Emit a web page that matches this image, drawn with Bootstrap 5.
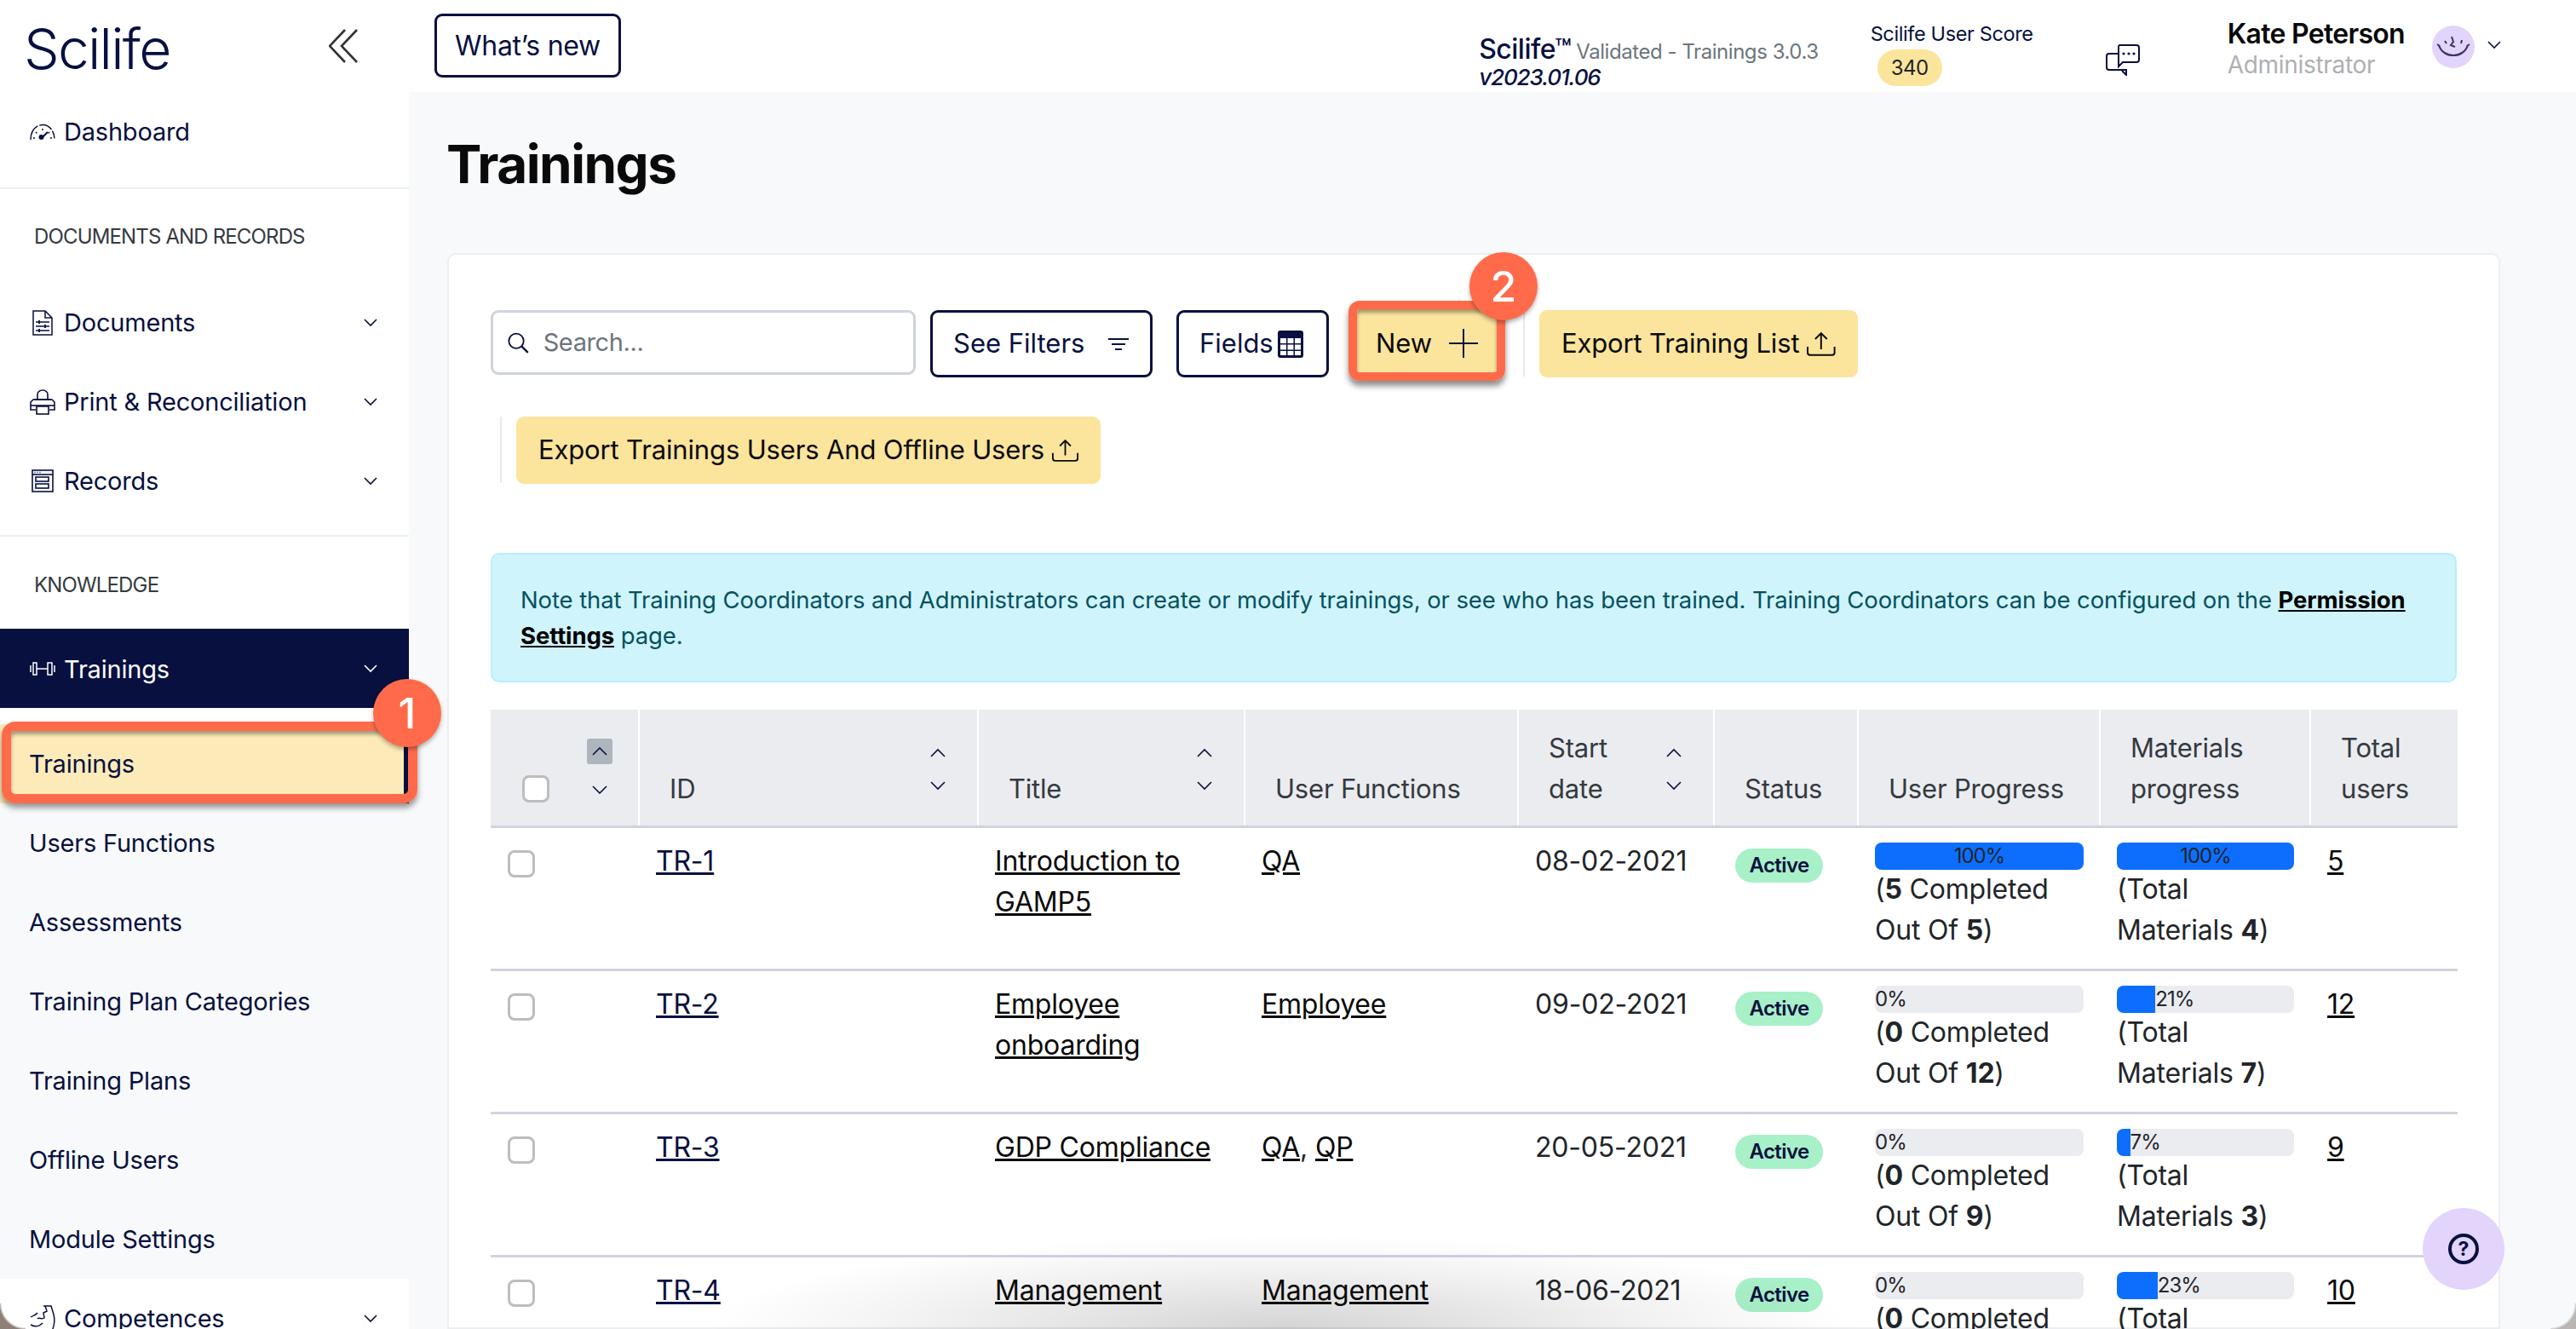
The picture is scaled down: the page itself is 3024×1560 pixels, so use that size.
<!doctype html>
<html lang="en">
<head>
<meta charset="utf-8">
<title>Trainings</title>
<link href="https://cdn.jsdelivr.net/npm/bootstrap@5.3.0/dist/css/bootstrap.min.css" rel="stylesheet">
<style>
:root{--sl-navy:#07103f;--sl-yellow:#fbe49c;--sl-orange:#ff6b4a;--sl-lilac:#e2d4fb;}
html,body{height:100%;}
body{font-family:"Inter","Liberation Sans",sans-serif;font-size:29px;letter-spacing:-.2px;color:#212529;background:#f8f9fa;overflow:hidden;position:relative;}
.sl-page{display:flex;width:3024px;height:1560px;overflow:hidden;}
.sl-side{flex:0 0 480px;background:#fff;position:relative;}
.sl-main{flex:1 1 auto;min-width:0;display:flex;flex-direction:column;}
.sl-brand{height:108px;padding:0 60px 0 28px;display:flex;align-items:center;justify-content:space-between;}
.sl-logo{font-size:66px;font-weight:300;color:var(--sl-navy);letter-spacing:-1.8px;line-height:1;margin-top:5px;}
.sl-item{height:93px;display:flex;align-items:center;padding:0 37px 0 35px;color:var(--sl-navy);text-decoration:none;gap:10px;}
.sl-item .sl-ico{flex:0 0 30px;display:flex;justify-content:center;}
.sl-item .sl-grow{flex:1 1 auto;}
.sl-item.sl-on{background:var(--sl-navy);color:#fff;}
.sl-item.sl-on .sl-grow{padding-top:3px;}
.sl-rule{border-top:2px solid #eceef0;margin:0;opacity:1;}
.sl-label{font-size:24px;line-height:44px;color:#343a40;padding-left:40px;letter-spacing:-.85px;}
.sl-sub{background:#f8f9fa;margin-top:19px;}
.sl-sub a{display:flex;align-items:center;height:93px;padding-left:34px;color:var(--sl-navy);text-decoration:none;}
.sl-sub a.sl-cur{background:#fcebb9;border-right:6px solid var(--sl-navy);position:relative;}
.sl-mark1{position:absolute;left:2px;top:-3px;width:488px;height:96px;border:11px solid var(--sl-orange);border-radius:16px;box-shadow:0 5px 7px rgba(0,0,0,.42),inset 0 4px 4px rgba(0,0,0,.35);pointer-events:none;}
.sl-dot{position:absolute;width:80px;height:80px;border-radius:50%;background:var(--sl-orange);color:#fff;font-size:50px;font-weight:500;display:flex;align-items:center;justify-content:center;box-shadow:0 3px 5px rgba(0,0,0,.3);letter-spacing:0;}
.sl-dot1{left:438px;top:-53px;}
.sl-dot2{left:132px;top:-67px;}
.sl-top{flex:0 0 108px;background:#fff;display:flex;align-items:center;padding-right:88px;}
.btn.sl-new{margin-left:30px;margin-bottom:1px;width:219px;height:75px;border:3px solid var(--sl-navy);border-radius:9px;color:var(--sl-navy);font-size:32px;padding:0;background:#fff;letter-spacing:-.3px;}
.sl-ver{margin-left:auto;margin-top:39px;line-height:33px;color:var(--sl-navy);font-weight:500;font-size:32px;letter-spacing:-.5px;}
.sl-ver small{color:#6c757d;font-size:24px;font-weight:400;margin-left:6px;letter-spacing:-.45px;}
.sl-ver em{display:block;font-size:26px;letter-spacing:-1.1px;margin-top:-3px;}
.sl-score{margin-left:61px;color:var(--sl-navy);font-size:23.5px;line-height:30px;margin-top:18px;letter-spacing:-.37px;}
.sl-score .badge{display:block;width:76px;height:43px;margin:3px 0 0 8px;border-radius:22px;background:var(--sl-yellow);color:#212529;font-size:24px;font-weight:400;line-height:43px;padding:0;letter-spacing:-.6px;}
.sl-chat{margin-left:85px;margin-top:32px;display:flex;}
.sl-who{margin-left:103px;line-height:37px;margin-top:8px;}
.sl-who b{display:block;color:#0a0a0a;font-size:32px;font-weight:600;letter-spacing:-.7px;}
.sl-who span{display:block;color:#adb0b3;font-size:28px;letter-spacing:-.3px;}
.sl-ava{margin-left:32px;width:50px;height:50px;border-radius:50%;background:var(--sl-lilac);display:flex;align-items:center;justify-content:center;margin-top:1px;}
.sl-who-c{margin-left:15px;display:flex;margin-top:-2px;}
.sl-h1{flex:0 0 68px;margin:51px 0 0 44px;font-size:62px;line-height:68px;font-weight:700;color:#0a0a0a;letter-spacing:-1.5px;}
.card.sl-panel{margin:70px 89px 0 45px;flex:1 1 auto;border:2px solid #eceef0;border-radius:10px 10px 0 0;padding:65px 49px 0;background:#fff;min-height:0;}
.sl-tools{display:flex;align-items:flex-start;}
.sl-search{width:499px;height:76px;border:3px solid #ced4da;border-radius:9px;display:flex;align-items:center;padding-left:17px;gap:17px;}
.sl-search .form-control{border:0;padding:0;box-shadow:none;font-size:29px;color:#6c757d;letter-spacing:-.4px;}
.sl-search .form-control::placeholder{color:#6c757d;}
.btn.sl-ghost{height:79px;border:3px solid var(--sl-navy);border-radius:9px;color:var(--sl-navy);font-size:31px;padding:0 24px;display:flex;align-items:center;background:#fff;letter-spacing:0;}
.btn.sl-gold{height:79px;border:0;border-radius:9px;background:var(--sl-yellow);color:#0a0a0a;font-size:31px;padding:0 26px;display:flex;align-items:center;letter-spacing:-.15px;white-space:nowrap;}
.sl-sep{flex:0 0 2px;height:78px;background:#e6e8ea;}
.sl-newwrap{position:relative;margin-left:33px;width:164px;height:75px;margin-top:-1px;}
.sl-newwrap .btn{width:164px;height:75px;justify-content:center;padding:5px 0 0;gap:20px;border-radius:4px;}
.sl-mark2{position:absolute;left:-10px;top:-10px;width:184px;height:94px;border:10px solid var(--sl-orange);border-radius:13px;box-shadow:0 6px 7px rgba(0,0,0,.45),inset 0 4px 4px rgba(0,0,0,.35);pointer-events:none;}
.alert.sl-note{margin:81px 0 32px;padding:32px 33px;border:2px solid #b6effb;border-radius:10px;font-size:27.5px;line-height:42px;color:#055160;background:#cff4fc;letter-spacing:-.11px;}
.alert.sl-note a{color:#000;font-weight:700;}
.table.sl-grid{table-layout:fixed;width:2309px;margin:0;font-size:32px;line-height:48px;letter-spacing:-.2px;}
.sl-grid th{background:#ebecf0;height:137px;padding:0 37px 19px 35px;vertical-align:bottom;font-weight:400;font-size:31px;letter-spacing:-.2px;color:#343a40;border-bottom:3px solid #d0d4dc;border-right:2px solid #fff;}
.sl-grid th:first-child{padding-left:37px;}
.sl-grid th:last-child{border-right:0;}
.sl-grid td{height:168px;padding:15px 19px 0 20px;vertical-align:top;border-bottom:3px solid #d0d4dc;color:#212529;}
.sl-grid td a{color:#0a0a0a;}
.sl-grid td a.sl-id{color:var(--sl-navy);}
.sl-thin{display:flex;justify-content:space-between;align-items:flex-end;}
.sl-sort{display:flex;flex-direction:column;gap:26px;margin-bottom:22px;flex:0 0 18px;}
.sl-sort svg,.sl-sort0 svg{display:block;}
.sl-grid .form-check-input{flex:0 0 32px;width:32px;height:32px;border:3px solid #bdbdbd;border-radius:8px;margin:11px 0 0;float:none;}
.sl-first{display:flex;align-items:flex-end;}
.sl-grid th .sl-first .form-check-input{margin:0 0 8px;}
.sl-sort0{margin-left:44px;width:30px;display:flex;flex-direction:column;align-items:center;gap:25px;margin-bottom:18px;}
.sl-sortbox{width:30px;height:30px;background:#adb5bd;border-radius:3px;display:flex;align-items:center;justify-content:center;}
.badge.sl-active{display:block;width:103px;height:40px;margin:9px 0 0 5px;padding:0;border-radius:20px;background:#a8f0c8;color:var(--sl-navy);font-size:24px;font-weight:600;line-height:40px;letter-spacing:-.6px;}
.progress.sl-bar{height:32px;border-radius:8px;background:#ebecf0;font-size:24px;color:#212529;letter-spacing:-1px;display:flex;align-items:center;line-height:32px;margin-top:2px;margin-bottom:-1px;}
.progress.sl-bar .progress-bar{background:#0d6efd;height:32px;color:#212529;overflow:visible;}
.sl-bar span{white-space:nowrap;}
.sl-grid td p{margin:0;}
.sl-fab{position:absolute;left:2844px;top:1418px;width:96px;height:96px;border-radius:50%;background:var(--sl-lilac);display:flex;align-items:center;justify-content:center;}
.sl-fab span{width:36px;height:36px;border:4px solid var(--sl-navy);border-radius:50%;color:var(--sl-navy);font-size:23px;font-weight:700;display:flex;align-items:center;justify-content:center;letter-spacing:0;}
.sl-drop{position:absolute;left:830px;bottom:0;width:1350px;height:110px;background:radial-gradient(ellipse 50% 100% at 50% 100%,rgba(0,0,0,.17),rgba(0,0,0,.05) 65%,rgba(0,0,0,0) 100%);pointer-events:none;}
.sl-cnr{position:absolute;bottom:0;width:30px;height:30px;pointer-events:none;}
.sl-cnr-l{left:0;background:radial-gradient(circle at 100% 0,rgba(0,0,0,0) 28px,#8d8078 31px);}
.sl-cnr-r{right:0;background:radial-gradient(circle at 0 0,rgba(0,0,0,0) 28px,#b9b6b3 31px);}
</style>
</head>
<body>
<div class="sl-page">
  <aside class="sl-side">
    <div class="sl-brand">
      <span class="sl-logo">Scilife</span>
      <svg width="34" height="40" viewBox="0 0 34 40" fill="none" stroke="#333" stroke-width="2.6"><path d="M19 1 1 20l18 19M33 1 15 20l18 19"/></svg>
    </div>
    <a class="sl-item" href="#" style="margin-bottom:19px">
      <span class="sl-ico"><svg width="30" height="20" viewBox="0 0 30 20" fill="none" stroke="#07103f" stroke-width="1.5"><path d="M1 19C1 9 7 1.5 15 1.5S29 9 29 19" stroke-dasharray="19 2 16 2 9 2"/><path d="M15 6v2M7 10l1.4 1.4M23 10l-1.4 1.4M4 17h2M24 17h2"/><path d="m14 17 7-7" stroke-width="2"/><circle cx="13.500" cy="16" r="3" fill="#07103f" stroke="none"/></svg></span>
      <span>Dashboard</span>
    </a>
    <hr class="sl-rule">
    <div class="sl-label" style="padding-top:34px;padding-bottom:32px">DOCUMENTS AND RECORDS</div>
    <a class="sl-item" href="#">
      <span class="sl-ico"><svg width="24" height="30" viewBox="0 0 24 30" fill="none" stroke="#07103f" stroke-width="1.5"><path d="M1 1h14l8 8v20H1zM15 1v8h8"/><path d="M4 14h16M4 19h16M4 24h16" stroke-width="1.3"/><path d="M8 12v4M15 17v4M8 22v4" stroke-width="1.8"/></svg></span>
      <span class="sl-grow">Documents</span>
      <svg width="16" height="10" viewBox="0 0 16 10" fill="none" stroke="#07103f" stroke-width="1.6"><path d="m1 1 7 7 7-7"/></svg>
    </a>
    <a class="sl-item" href="#">
      <span class="sl-ico"><svg width="30" height="30" viewBox="0 0 30 30" fill="none" stroke="#07103f" stroke-width="1.6"><path d="M9 12V6a6 5 0 0 1 12 0v6M5 12h20"/><path d="M7 24H1v-9l3-3h22l3 3v9h-6"/><rect x="8" y="20" width="14" height="9"/><path d="M1 19h28"/></svg></span>
      <span class="sl-grow">Print &amp; Reconciliation</span>
      <svg width="16" height="10" viewBox="0 0 16 10" fill="none" stroke="#07103f" stroke-width="1.6"><path d="m1 1 7 7 7-7"/></svg>
    </a>
    <a class="sl-item" href="#" style="margin-bottom:17px">
      <span class="sl-ico"><svg width="26" height="27" viewBox="0 0 26 27" fill="none" stroke="#07103f" stroke-width="1.6"><rect x="1" y="1" width="24" height="25"/><path d="M1 6h24"/><path d="M3.500 3.500h1M6.500 3.500h1M9.500 3.500h1" stroke-width="1.400"/><rect x="5" y="9" width="15" height="5"/><rect x="5" y="17" width="15" height="5"/></svg></span>
      <span class="sl-grow">Records</span>
      <svg width="16" height="10" viewBox="0 0 16 10" fill="none" stroke="#07103f" stroke-width="1.6"><path d="m1 1 7 7 7-7"/></svg>
    </a>
    <hr class="sl-rule">
    <div class="sl-label" style="padding-top:35px;padding-bottom:29px">KNOWLEDGE</div>
    <a class="sl-item sl-on" href="#">
      <span class="sl-ico"><svg width="30" height="16" viewBox="0 0 30 16" fill="none" stroke="#fff" stroke-width="1.5"><rect x="4" y="1" width="4" height="14"/><rect x="21" y="1" width="5" height="14"/><path d="M1 4v8M29 4v8M8 8h13"/></svg></span>
      <span class="sl-grow">Trainings</span>
      <svg width="16" height="10" viewBox="0 0 16 10" fill="none" stroke="#fff" stroke-width="1.6"><path d="m1 1 7 7 7-7"/></svg>
    </a>
    <nav class="sl-sub">
      <a class="sl-cur" href="#">Trainings<span class="sl-mark1"></span><span class="sl-dot sl-dot1">1</span></a>
      <a href="#">Users Functions</a>
      <a href="#">Assessments</a>
      <a href="#">Training Plan Categories</a>
      <a href="#">Training Plans</a>
      <a href="#">Offline Users</a>
      <a href="#">Module Settings</a>
    </nav>
    <a class="sl-item" href="#">
      <span class="sl-ico"><svg width="30" height="34" viewBox="0 0 30 34" fill="none" stroke="#07103f" stroke-width="1.5"><path d="M1 15c3-2 6-2 8-5M16 2h9l3 10c2 8 0 14-2 20H8M18 2l2 6-4 2 1 6c-3 2-6-1-8 1M1 24c5 3 10 2 14-2"/></svg></span>
      <span class="sl-grow">Competences</span>
      <svg width="16" height="10" viewBox="0 0 16 10" fill="none" stroke="#07103f" stroke-width="1.6"><path d="m1 1 7 7 7-7"/></svg>
    </a>
  </aside>

  <main class="sl-main">
    <header class="sl-top">
      <button class="btn sl-new" type="button">What’s new</button>
      <div class="sl-ver">Scilife™<small>Validated - Trainings 3.0.3</small><em>v2023.01.06</em></div>
      <div class="sl-score">Scilife User Score<span class="badge">340</span></div>
      <div class="sl-chat"><svg width="40" height="37" viewBox="0 0 40 37" fill="none" stroke="#07103f" stroke-width="2"><path d="M16 1h20a3 3 0 0 1 3 3v14a3 3 0 0 1-3 3H20l-5 5V4a3 3 0 0 1 1-3z"/><path d="M15 11H4a3 3 0 0 0-3 3v13a3 3 0 0 0 3 3h20v6l-5-5"/><path d="M24 36v-7"/><circle cx="21" cy="11" r="1.600" fill="#07103f" stroke="none"/><circle cx="27" cy="11" r="1.600" fill="#07103f" stroke="none"/><circle cx="33" cy="11" r="1.600" fill="#07103f" stroke="none"/></svg></div>
      <div class="sl-who"><b>Kate Peterson</b><span>Administrator</span></div>
      <div class="sl-ava"><svg width="40" height="26" viewBox="0 0 40 26" fill="none" stroke="#3a3560" stroke-width="2"><path d="M3 11c5 16 29 16 34 0" stroke-width="2.200"/><path d="M1 10l3 2M39 10l-3 2M10 6l2 3M30 5l-1 4M18 1l2 6-3 4 5 2"/></svg></div>
      <div class="sl-who-c"><svg width="16" height="10" viewBox="0 0 16 10" fill="none" stroke="#07103f" stroke-width="1.6"><path d="m1 1 7 7 7-7"/></svg></div>
    </header>
    <h1 class="sl-h1">Trainings</h1>
    <section class="card sl-panel">
      <div class="sl-tools">
        <div class="sl-search">
          <svg width="27" height="27" viewBox="0 0 27 27" fill="none" stroke="#07103f" stroke-width="2"><circle cx="11" cy="11" r="9.500"/><path d="m18 18 8 8" stroke-width="2.600"/></svg>
          <input class="form-control" type="text" placeholder="Search...">
        </div>
        <button class="btn sl-ghost" type="button" style="margin-left:17px;width:261px;gap:28px">See Filters
          <svg width="24" height="14" viewBox="0 0 24 14" fill="none" stroke="#07103f" stroke-width="2"><path d="M0 1h24M4 7h16M8 13h8"/></svg>
        </button>
        <button class="btn sl-ghost" type="button" style="margin-left:28px;width:179px;gap:5px;padding:0 0 0 24px">Fields
          <svg width="30" height="32" viewBox="0 0 30 32"><rect width="30" height="32" rx="3" fill="#07103f"/><path fill="#fff" d="M3 9h7v6H3zM11.500 9h7v6h-7zM20 9h7v6h-7zM3 16.500h7v6H3zM11.500 16.500h7v6h-7zM20 16.500h7v6h-7zM3 24h7v5H3zM11.500 24h7v5h-7zM20 24h7v5h-7z"/></svg>
        </button>
        <div class="sl-newwrap">
          <button class="btn sl-gold" type="button">New
            <svg width="34" height="34" viewBox="0 0 34 34" fill="none" stroke="#07103f" stroke-width="2"><path d="M17 0v34M0 17h34"/></svg>
          </button>
          <span class="sl-mark2"></span>
          <span class="sl-dot sl-dot2">2</span>
        </div>
        <div class="sl-sep" style="margin-left:31px"></div>
        <button class="btn sl-gold" type="button" style="margin-left:17px;width:374px;gap:9px">Export Training List
          <svg width="34" height="29" viewBox="0 0 34 29" fill="none" stroke="#0a0a0a" stroke-width="2"><path d="M17 21V2M10 9l7-7 7 7M1 18v7a3 3 0 0 0 3 3h26a3 3 0 0 0 3-3v-7"/></svg>
        </button>
      </div>
      <div class="sl-tools" style="margin-top:46px;margin-left:11px">
        <div class="sl-sep"></div>
        <button class="btn sl-gold" type="button" style="margin-left:17px;width:686px;gap:9px">Export Trainings Users And Offline Users
          <svg width="34" height="29" viewBox="0 0 34 29" fill="none" stroke="#0a0a0a" stroke-width="2"><path d="M17 21V2M10 9l7-7 7 7M1 18v7a3 3 0 0 0 3 3h26a3 3 0 0 0 3-3v-7"/></svg>
        </button>
      </div>
      <div class="alert sl-note" role="alert">Note that Training Coordinators and Administrators can create or modify trainings, or see who has been trained. Training Coordinators can be configured on the <a href="#">Permission Settings</a> page.</div>
      <table class="table sl-grid">
        <colgroup><col style="width:174px"><col style="width:398px"><col style="width:313px"><col style="width:321px"><col style="width:230px"><col style="width:169px"><col style="width:284px"><col style="width:247px"><col style="width:173px"></colgroup>
        <thead>
          <tr>
            <th><div class="sl-first"><input class="form-check-input" type="checkbox" aria-label="all"><div class="sl-sort0"><span class="sl-sortbox"><svg width="18" height="10" viewBox="0 0 18 10" fill="none" stroke="#07103f" stroke-width="1.6"><path d="m1 9 8-8 8 8"/></svg></span><svg width="18" height="10" viewBox="0 0 18 10" fill="none" stroke="#07103f" stroke-width="1.6"><path d="m1 1 8 8 8-8"/></svg></div></div></th>
            <th><div class="sl-thin"><span>ID</span><div class="sl-sort"><svg width="18" height="12" viewBox="0 0 18 10" fill="none" stroke="#07103f" stroke-width="1.6"><path d="m1 9 8-8 8 8"/></svg><svg width="18" height="12" viewBox="0 0 18 10" fill="none" stroke="#07103f" stroke-width="1.6"><path d="m1 1 8 8 8-8"/></svg></div></div></th>
            <th><div class="sl-thin"><span>Title</span><div class="sl-sort"><svg width="18" height="12" viewBox="0 0 18 10" fill="none" stroke="#07103f" stroke-width="1.6"><path d="m1 9 8-8 8 8"/></svg><svg width="18" height="12" viewBox="0 0 18 10" fill="none" stroke="#07103f" stroke-width="1.6"><path d="m1 1 8 8 8-8"/></svg></div></div></th>
            <th>User Functions</th>
            <th><div class="sl-thin"><span>Start<br>date</span><div class="sl-sort"><svg width="18" height="12" viewBox="0 0 18 10" fill="none" stroke="#07103f" stroke-width="1.6"><path d="m1 9 8-8 8 8"/></svg><svg width="18" height="12" viewBox="0 0 18 10" fill="none" stroke="#07103f" stroke-width="1.6"><path d="m1 1 8 8 8-8"/></svg></div></div></th>
            <th>Status</th>
            <th>User Progress</th>
            <th>Materials progress</th>
            <th>Total users</th>
          </tr>
        </thead>
        <tbody>
          <tr>
            <td><input class="form-check-input" type="checkbox" aria-label="TR-1"></td>
            <td><a class="sl-id" href="#">TR-1</a></td>
            <td><a href="#">Introduction to GAMP5</a></td>
            <td><a href="#">QA</a></td>
            <td>08-02-2021</td>
            <td><span class="badge sl-active">Active</span></td>
            <td><div class="progress sl-bar"><div class="progress-bar" style="width:100%">100%</div></div><p>(<b>5</b> Completed Out Of <b>5</b>)</p></td>
            <td><div class="progress sl-bar"><div class="progress-bar" style="width:100%">100%</div></div><p>(Total Materials <b>4</b>)</p></td>
            <td><a href="#">5</a></td>
          </tr>
          <tr>
            <td><input class="form-check-input" type="checkbox" aria-label="TR-2"></td>
            <td><a class="sl-id" href="#">TR-2</a></td>
            <td><a href="#">Employee onboarding</a></td>
            <td><a href="#">Employee</a></td>
            <td>09-02-2021</td>
            <td><span class="badge sl-active">Active</span></td>
            <td><div class="progress sl-bar"><span>0%</span></div><p>(<b>0</b> Completed Out Of <b>12</b>)</p></td>
            <td><div class="progress sl-bar"><div class="progress-bar" style="width:21.8%"></div><span>21%</span></div><p>(Total Materials <b>7</b>)</p></td>
            <td><a href="#">12</a></td>
          </tr>
          <tr>
            <td><input class="form-check-input" type="checkbox" aria-label="TR-3"></td>
            <td><a class="sl-id" href="#">TR-3</a></td>
            <td><a href="#">GDP Compliance</a></td>
            <td><a href="#">QA</a>, <a href="#">QP</a></td>
            <td>20-05-2021</td>
            <td><span class="badge sl-active">Active</span></td>
            <td><div class="progress sl-bar"><span>0%</span></div><p>(<b>0</b> Completed Out Of <b>9</b>)</p></td>
            <td><div class="progress sl-bar"><div class="progress-bar" style="width:7.5%"></div><span>7%</span></div><p>(Total Materials <b>3</b>)</p></td>
            <td><a href="#">9</a></td>
          </tr>
          <tr>
            <td><input class="form-check-input" type="checkbox" aria-label="TR-4"></td>
            <td><a class="sl-id" href="#">TR-4</a></td>
            <td><a href="#">Management</a></td>
            <td><a href="#">Management</a></td>
            <td>18-06-2021</td>
            <td><span class="badge sl-active">Active</span></td>
            <td><div class="progress sl-bar"><span>0%</span></div><p>(<b>0</b> Completed Out Of <b>6</b>)</p></td>
            <td><div class="progress sl-bar"><div class="progress-bar" style="width:23%"></div><span>23%</span></div><p>(Total Materials <b>5</b>)</p></td>
            <td><a href="#">10</a></td>
          </tr>
        </tbody>
      </table>
    </section>
  </main>
</div>
<div class="sl-drop"></div>
<div class="sl-fab"><span>?</span></div>
<div class="sl-cnr sl-cnr-l"></div>
<div class="sl-cnr sl-cnr-r"></div>
<script src="https://cdn.jsdelivr.net/npm/bootstrap@5.3.0/dist/js/bootstrap.bundle.min.js"></script>
</body>
</html>
